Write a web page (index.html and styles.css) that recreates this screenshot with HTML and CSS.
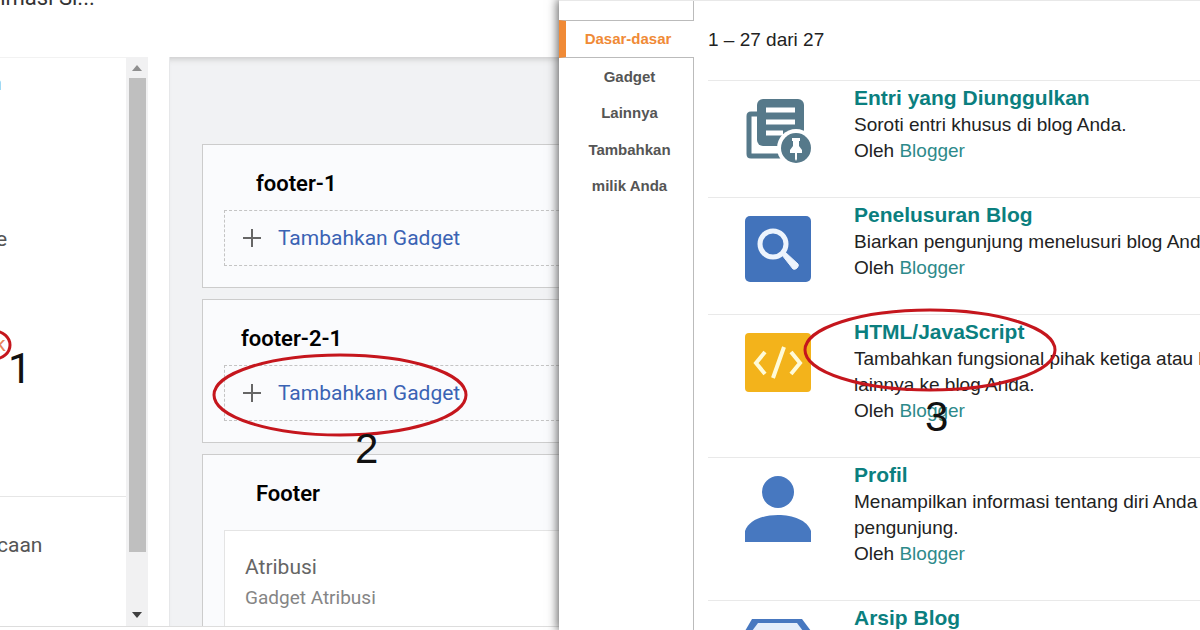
FILE: index.html
```html
<!DOCTYPE html>
<html lang="id">
<head>
<meta charset="utf-8">
<title>Tata Letak</title>
<link rel="stylesheet" href="styles.css">
</head>
<body>
<div class="screen">
  <section class="editor">
    <header class="topbar"><span class="blog-name">nimasi Si...</span></header>
    <div class="workspace">
      <nav class="sidebar">
        <ul class="menu">
          <li>n</li><li></li><li></li><li class="menu-edge">e</li><li></li><li class="current">k</li>
        </ul>
        <p class="reading">caan</p>
      </nav>
      <div class="scrollbar">
        <svg class="arrow" viewBox="0 0 10 6"><path d="M0 6 5 0l5 6z" fill="#8f8f8f"/></svg>
        <div class="thumb"></div>
        <svg class="arrow" viewBox="0 0 10 6"><path d="M0 0h10L5 6z" fill="#404040"/></svg>
      </div>
      <main class="canvas">
        <section class="card">
          <h2 class="indent">footer-1</h2>
          <button class="add" type="button"><svg class="plus" viewBox="0 0 18 18"><path d="M9 0v18M0 9h18" stroke="#666" stroke-width="2"/></svg>Tambahkan Gadget</button>
        </section>
        <section class="card">
          <h2>footer-2-1</h2>
          <button class="add" type="button"><svg class="plus" viewBox="0 0 18 18"><path d="M9 0v18M0 9h18" stroke="#666" stroke-width="2"/></svg>Tambahkan Gadget</button>
        </section>
        <section class="card last">
          <h2 class="indent">Footer</h2>
          <div class="widget"><h3>Atribusi</h3><p>Gadget Atribusi</p></div>
        </section>
      </main>
    </div>
  </section>

  <section class="dialog">
    <nav class="tabs">
      <a class="tab active" href="#">Dasar-dasar</a>
      <a class="tab" href="#">Gadget<br>Lainnya</a>
      <a class="tab" href="#">Tambahkan<br>milik Anda</a>
    </nav>
    <div class="results">
      <p class="count">1 – 27 dari 27</p>
      <article class="row">
        <svg class="icon" viewBox="0 0 66 66">
          <path d="M12 15H6q-2 0-2 2v38q0 2 2 2h32" fill="none" stroke="#56798a" stroke-width="5"/>
          <rect x="12" y="0" width="47" height="47" rx="6" fill="#56798a"/>
          <path d="M21 11h29M21 23h29M21 34h17" stroke="#fff" stroke-width="5"/>
          <circle cx="51" cy="49" r="19" fill="#fff"/><circle cx="51" cy="49" r="15" fill="#56798a"/>
          <path d="M47 39h8v3h-1v5l3 4v3h-5v6l-1 2-1-2v-6h-5v-3l3-4v-5h-1z" fill="#fff"/>
        </svg>
        <div class="info"><h2>Entri yang Diunggulkan</h2><p>Soroti entri khusus di blog Anda.</p><p>Oleh <a href="#">Blogger</a></p></div>
      </article>
      <article class="row">
        <svg class="icon" viewBox="0 0 66 66">
          <rect width="66" height="66" rx="5" fill="#4273bb"/>
          <circle cx="28" cy="28" r="13" fill="none" stroke="#edf4fd" stroke-width="5"/>
          <path d="M37 39l3-3 13 12q1 2-1 4t-4 1z" fill="#edf4fd" stroke="#edf4fd" stroke-width="1"/>
        </svg>
        <div class="info"><h2>Penelusuran Blog</h2><p>Biarkan pengunjung menelusuri blog Anda.</p><p>Oleh <a href="#">Blogger</a></p></div>
      </article>
      <article class="row">
        <svg class="icon" viewBox="0 0 66 66">
          <rect width="66" height="59" rx="4" fill="#f3b31b"/>
          <path d="M20 19l-9 11 9 11M46 19l9 11-9 11M39 14L28 45" fill="none" stroke="#fffbd8" stroke-width="4"/>
        </svg>
        <div class="info"><h2>HTML/JavaScript</h2><p>Tambahkan fungsional pihak ketiga atau kode<br>lainnya ke blog Anda.</p><p>Oleh <a href="#">Blogger</a></p></div>
      </article>
      <article class="row">
        <svg class="icon" viewBox="0 0 66 66"><circle cx="33" cy="16" r="16" fill="#4778c0"/><path d="M0 66V55C4 44 18 39 33 39s29 5 33 16v11z" fill="#4778c0"/></svg>
        <div class="info"><h2>Profil</h2><p>Menampilkan informasi tentang diri Anda kepada<br>pengunjung.</p><p>Oleh <a href="#">Blogger</a></p></div>
      </article>
      <article class="row">
        <svg class="icon" viewBox="0 0 66 66"><path d="M7 0h50l9 12v54H0V12z" fill="#4778c0"/><path d="M13 4h39l6 8H7z" fill="#e4eefb"/></svg>
        <div class="info"><h2>Arsip Blog</h2><p>Menampilkan link ke entri lama.</p></div>
      </article>
    </div>
  </section>

  <svg class="rings" viewBox="0 0 1200 630" fill="none" stroke="#c5161d" stroke-width="3">
    <ellipse cx="-6" cy="345" rx="16" ry="14"/>
    <ellipse cx="340" cy="395" rx="126" ry="40"/>
    <ellipse cx="930" cy="350" rx="125" ry="40"/>
  </svg>
  <span class="step step-one">1</span>
  <span class="step step-two">2</span>
  <span class="step step-three">3</span>
</div>
</body>
</html>
```

FILE: styles.css
```css
* { box-sizing: border-box; }
body { margin: 0; background: #fff; font-family: Roboto, sans-serif; }
h2, h3, p, ul { margin: 0; padding: 0; }
a { text-decoration: none; }
svg { display: block; flex: none; }

.screen { position: relative; display: flex; height: 100vh; overflow: hidden; }

.editor { width: 559px; flex: none; display: flex; flex-direction: column; padding-bottom: 3px; }
.topbar { height: 57px; flex: none; }
.blog-name { display: block; margin: -14px 0 0 -12px; font-size: 22px; line-height: 24px; color: #333; }
.workspace { flex: 1; min-height: 0; display: flex; border-bottom: 1px solid #ddd; }

.sidebar { width: 126px; flex: none; border-top: 1px solid #f2f2f2; font-size: 21px; color: #555; overflow: hidden; }
.menu { list-style: none; height: 439px; border-bottom: 1px solid #e6e6e6; }
.menu li { height: 52px; line-height: 50px; margin-left: -10px; }
.menu .menu-edge { margin-left: -4px; }
.menu .current { margin-left: -5px; line-height: 52px; color: #e8825a; }
.reading { line-height: 96px; margin-left: -3px; }

.scrollbar { width: 22px; flex: none; display: flex; flex-direction: column; align-items: center; gap: 7px; padding: 8px 0; background: #f1f1f2; }
.scrollbar .thumb { width: 17px; height: 474px; background: #bfbfbf; }
.arrow { width: 10px; height: 6px; }
.arrow:last-child { margin-top: auto; }

.canvas { flex: 1; min-width: 0; margin-left: 21px; padding: 87px 0 0 32px; display: flex; flex-direction: column; gap: 11px; border-left: 1px solid #e6e7e9; background: #f1f2f4; box-shadow: inset 0 7px 6px -5px #c8c8c8; overflow: hidden; }
.card { flex: none; height: 144px; padding: 24px 0 0 21px; border: 1px solid #ccc; border-right: 0; background: #fafbfd; }
.card h2 { margin-left: 17px; font-size: 22px; line-height: 30px; font-weight: 600; color: #000; }
.card h2.indent { margin-left: 32px; }
.add { display: flex; align-items: center; gap: 17px; width: 100%; height: 56px; margin-top: 11px; padding: 0 0 0 18px; border: 1px dashed #c4c4c4; border-right: 0; background: none; font-family: inherit; font-size: 21px; color: #3a63b4; }
.plus { width: 18px; height: 18px; }
.card.last { height: 200px; }
.widget { height: 140px; margin-top: 21px; padding: 22px 0 0 20px; background: #fff; border: 1px solid #e4e4e4; border-right: 0; }
.widget h3 { font-size: 21px; line-height: 28px; font-weight: 400; color: #666; }
.widget p { margin-top: 3px; font-size: 19px; line-height: 28px; color: #858585; }

.dialog { flex: 1; min-width: 0; display: flex; background: #fff; border-top: 1px solid #e8e8e8; box-shadow: 0 0 10px 1px #555; font-family: "Liberation Sans", sans-serif; }
.tabs { width: 135px; flex: none; padding-top: 19px; display: flex; flex-direction: column; background: linear-gradient(#bbb, #bbb) right / 1px 100% no-repeat; }
.tab { padding: 1px 0 0 6px; text-align: center; font-size: 15px; line-height: 36px; font-weight: 700; color: #555; }
.tab.active { padding: 0 4px 0 0; border: solid #bbb; border-width: 1px 0; border-left: 7px solid #f08a36; background: #fff; color: #f08a36; }
.results { flex: 1; min-width: 0; padding-left: 14px; white-space: nowrap; overflow: hidden; font-size: 19px; line-height: 26px; color: #222; }
.count { padding: 26px 0 27px; }
.row { display: flex; align-items: flex-start; gap: 43px; min-height: 116px; padding: 3px 0 33px 37px; border-top: 1px solid #e9e9e9; }
.icon { width: 66px; height: 66px; margin: 15px 0 -10px; }
.info h2 { margin-bottom: 1px; font-size: 21px; line-height: 27px; font-weight: 700; color: #0b7f7f; }
.info a { color: #2d8a8a; }

.rings { position: absolute; left: 0; top: 0; width: 1200px; height: 630px; }
.step { position: absolute; font: 42px/48px "Liberation Sans", sans-serif; color: #111; }
.step-one { left: 8px; top: 345px; font-family: Roboto, sans-serif; }
.step-two { left: 355px; top: 425px; }
.step-three { left: 925px; top: 393px; }
```
